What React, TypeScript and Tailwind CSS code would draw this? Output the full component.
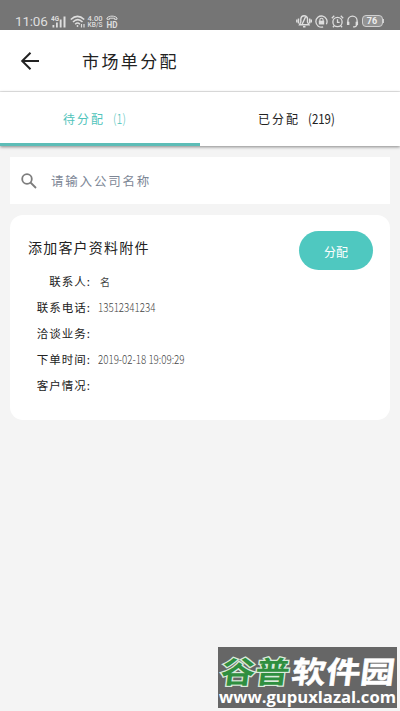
import type { ReactNode } from "react";

const rows = [
  { label: "联系人:", value: "名", cjk: true },
  { label: "联系电话:", value: "13512341234" },
  { label: "洽谈业务:", value: "" },
  { label: "下单时间:", value: "2019-02-18 19:09:29" },
  { label: "客户情况:", value: "" },
];

function Icon({ children, className }: { children: ReactNode; className: string }) {
  return (
    <svg viewBox="0 0 24 24" fill="none" stroke="currentColor" strokeWidth="2.4" className={className}>
      {children}
    </svg>
  );
}

function StatusBar() {
  return (
    <div className="flex h-[30px] shrink-0 items-end justify-between bg-[#757575] pr-[16px] pb-[1px] pl-[15px] text-[#dedede]">
      <div className="flex h-[16px] items-center">
        <span className="w-[35px] font-['Roboto'] text-[13.5px] tracking-[-0.2px]">11:06</span>
        <svg viewBox="0 0 15 13" className="ml-[1px] h-[13px] w-[15px]" fill="currentColor">
          <text x="0" y="5.5" fontSize="6.5" fontFamily="Roboto" fontWeight="700" textLength="8" lengthAdjust="spacingAndGlyphs">
            4G
          </text>
          <path d="M1.5 10h1.8v2.500H1.500zM5 7.500h1.800v5H5zM8.700 4.500h1.900v8H8.700zM12.500 1.500h2v11h-2z" />
        </svg>
        <svg viewBox="0 0 16 13" className="ml-[4px] h-[13px] w-[16px]" fill="none" stroke="currentColor" strokeWidth="1.6">
          <path d="M.8 4.500C5 .5 10 .5 14.200 4.500M3 7c3-3 6.500-3 9.500 0M5.200 9.200c1.500-1.500 3.200-1.500 4.700 0" />
          <circle cx="7.500" cy="11" r=".9" fill="currentColor" stroke="none" />
          <path d="M11.500 9v3.500M14 9v3.500" strokeWidth="1.200" />
        </svg>
        <svg viewBox="0 0 17 13" className="h-[13px] w-[17px]" fill="currentColor" fontFamily="Roboto" fontWeight="500">
          <text x="1.500" y="5.800" fontSize="7" textLength="15" lengthAdjust="spacingAndGlyphs">
            4.00
          </text>
          <text x="1.500" y="12.300" fontSize="6.300" textLength="15" lengthAdjust="spacingAndGlyphs">
            KB/S
          </text>
        </svg>
        <svg viewBox="0 0 12 13" className="ml-[3px] h-[13px] w-[12px]" fill="currentColor">
          <path d="M1 4.300V3C3 .5 9 .5 11 3v1.300H8.500V3.200h-5v1.100z" fill="none" stroke="currentColor" />
          <text x="0.500" y="12.500" fontSize="9" fontFamily="Roboto" fontWeight="700" textLength="11" lengthAdjust="spacingAndGlyphs">
            HD
          </text>
        </svg>
      </div>
      <div className="flex h-[16px] items-center">
        <svg viewBox="0 0 16 14" className="h-[14px] w-[16px]" fill="none" stroke="currentColor" strokeWidth="1.400">
          <path d="M3.500 10.700h9.500L11.500 8V5C11.500 3 10 1.800 8 1.800S5 3 4.800 5V8zM7 12.700h2.500M9.500 3L6 10.500" />
          <path d="M2.500 4.500v5M.8 5.500v3M13.700 4.500v5M15.300 5.500v3" />
        </svg>
        <Icon className="ml-[3px] h-[13px] w-[13px]">
          <path d="M15 22A10.300 10.300 0 1 1 21 17" />
          <path d="M9 11V9a3 3 0 0 1 6 0v2" strokeWidth="2" />
          <rect x="7" y="10.500" width="10" height="7" fill="currentColor" stroke="none" />
        </Icon>
        <Icon className="ml-[3px] h-[13px] w-[13px]">
          <circle cx="12" cy="13" r="8.500" />
          <path d="M12 8v5.500h4M1.500 6l4.500-4.500M22.500 6L18 1.500M6 20l-2.500 2.500M18 20l2.500 2.500" />
        </Icon>
        <Icon className="ml-[2px] h-[13px] w-[13px]">
          <path d="M3.500 14V10.500a8.500 8.500 0 0 1 17 0V14" />
          <path d="M4 12.500v6M20 12.500v6" strokeWidth="4.500" />
          <path d="M20 17c0 4-3 5-7 5" />
        </Icon>
        <div className="ml-[3px] flex h-[12px] w-[21px] items-center justify-center rounded-[4px] border border-[#d0d0d0] bg-[#929292] font-['Roboto'] text-[9px] leading-none font-bold text-[#eeeeee]">
          76
        </div>
        <div className="h-[4px] w-[1.5px] bg-[#d0d0d0]" />
      </div>
    </div>
  );
}

function Watermark() {
  return (
    <div className="absolute top-[647px] left-[218px] h-[61px] w-[179px] bg-[#666666]">
      <svg viewBox="0 0 179 61" className="h-full w-full">
        <g fontFamily="'Noto Sans CJK SC', sans-serif" fontWeight="700" fontSize="30" transform="skewX(-7)">
          <text x="6" y="36" textLength="69" lengthAdjust="spacingAndGlyphs" fill="#2f8f3f" stroke="#d9eadb" strokeWidth="2.500" paintOrder="stroke">
            谷普
          </text>
          <text x="77" y="36" textLength="103" lengthAdjust="spacingAndGlyphs" fill="#ffffff" stroke="#ffffff" strokeWidth="0.500">
            软件园
          </text>
        </g>
        <text x="1" y="55.500" textLength="177" lengthAdjust="spacingAndGlyphs" fontFamily="'Open Sans', sans-serif" fontWeight="700" fontSize="16" fill="#ffffff">
          www.gupuxlazal.com
        </text>
      </svg>
    </div>
  );
}

export default function App() {
  return (
    <div className="relative flex h-[711px] w-[400px] flex-col overflow-hidden bg-[#f4f4f4] font-['Noto_Sans_CJK_SC',sans-serif] text-[#222222]">
      <StatusBar />

      <header className="flex h-[62px] shrink-0 items-center border-b border-[#e9e9e9] bg-white pl-[20px]">
        <svg viewBox="0 0 20 20" className="h-[20px] w-[20px]" fill="none" stroke="#222222" strokeWidth="2">
          <path d="M19 10H2.500M10.500 1.700L2.200 10l8.300 8.300" />
        </svg>
        <h1 className="ml-[42px] text-[17px] leading-none tracking-[2.4px]">市场单分配</h1>
      </header>

      <nav className="z-10 grid h-[54px] shrink-0 grid-cols-2 bg-white text-[12px] leading-none shadow-[0_1px_3px_rgba(0,0,0,0.45)]">
        <div className="flex items-center border-b-[3px] border-[#5dbdb7] pt-[2px] pl-[63px] text-[#4fc4bb]">
          <span className="w-[50px] tracking-[2px]">待分配</span>
          <span className="origin-left scale-x-[0.85] text-[13px] font-light">(1)</span>
        </div>
        <div className="flex items-center pt-[2px] pb-[3px] pl-[58px]">
          <span className="w-[50px] tracking-[2px]">已分配</span>
          <span className="origin-left scale-x-[0.85] text-[13.5px]">(219)</span>
        </div>
      </nav>

      <div className="mx-[10px] mt-[11px] flex h-[47px] shrink-0 items-center bg-white pl-[11px]">
        <svg viewBox="0 0 16 16" className="h-[16px] w-[16px]" fill="none" stroke="#7d7d7d" strokeWidth="1.800">
          <circle cx="6" cy="6" r="4.800" />
          <path d="M9.500 9.500l5.500 5.500" />
        </svg>
        <span className="mt-[1px] ml-[14px] text-[12.500px] leading-none tracking-[1.8px] text-[#7d8796]">请输入公司名称</span>
      </div>

      <section className="mx-[10px] mt-[11px] h-[205px] shrink-0 rounded-[13px] bg-white pt-[16px]">
        <div className="flex h-[39px] items-start justify-between pr-[17px] pl-[18px]">
          <h2 className="mt-[9px] text-[14px] leading-none tracking-[1.200px]">添加客户资料附件</h2>
          <button className="h-[39px] w-[74px] rounded-full bg-[#4fc8c0] pt-[2px] text-[12px] text-white">分配</button>
        </div>
        <ul className="mt-[-1px]">
          {rows.map((row) => (
            <li key={row.label} className="flex h-[26px] items-center text-[11.500px] leading-none">
              <span className="w-[81px] text-right tracking-[1px] whitespace-nowrap">{row.label}</span>
              {row.cjk ? (
                <span className="ml-[9px] text-[10px] text-[#444444]">{row.value}</span>
              ) : (
                <span className="mb-[2px] ml-[7px] origin-left scale-x-[0.78] text-[12.500px] font-light whitespace-nowrap text-[#444444]">
                  {row.value}
                </span>
              )}
            </li>
          ))}
        </ul>
      </section>

      <Watermark />
    </div>
  );
}
